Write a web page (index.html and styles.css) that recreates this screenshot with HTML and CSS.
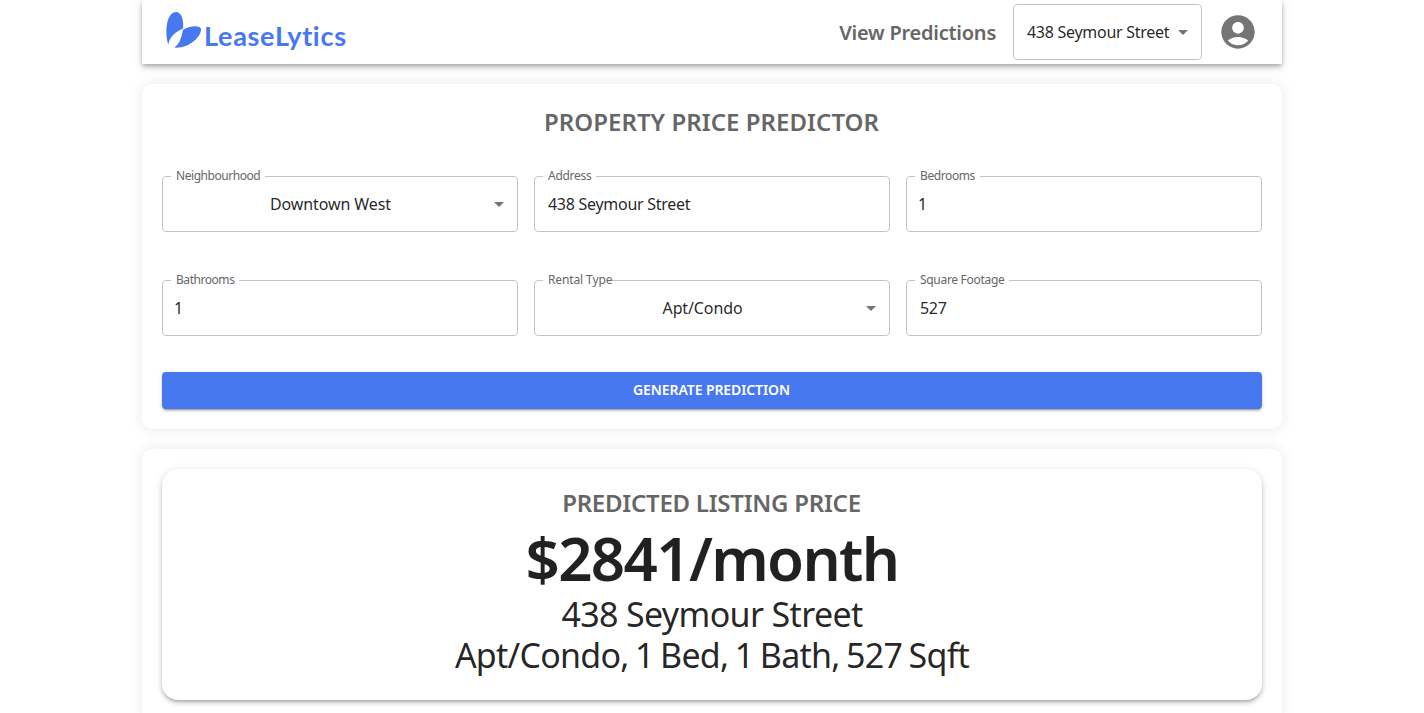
FILE: index.html
```html
<!DOCTYPE html>
<html lang="en">
<head>
<meta charset="utf-8">
<title>LeaseLytics</title>
<link rel="stylesheet" href="styles.css">
</head>
<body>
<div class="page">
  <header class="appbar">
    <a class="brand">
      <svg class="brand-mark" width="36" height="38" viewBox="0 0 36 38"><path d="M2.300 33.500C-1.500 23 0 1 10 1c6.200 0 8 10 6.900 16.800C10 20.500 4 25 2.300 33.500Z"/><path d="M8 36.600c5.500-3.200 7.500-10 8.900-17.600 5-4 17.500-5.500 18.100-1C35.500 25 24 37.800 8 36.600Z"/></svg>
      <span class="brand-name">LeaseLytics</span>
    </a>
    <nav class="nav">
      <a class="nav-link">View Predictions</a>
      <div class="picker"><span class="value">438 Seymour Street</span><svg class="arrow" viewBox="0 0 24 24"><path d="M7 10l5 5 5-5z"/></svg></div>
      <svg class="avatar" viewBox="0 0 24 24"><path d="M12 2C6.480 2 2 6.480 2 12s4.480 10 10 10 10-4.480 10-10S17.520 2 12 2zm0 4c1.930 0 3.500 1.570 3.500 3.500S13.930 13 12 13s-3.500-1.570-3.500-3.500S10.070 6 12 6zm0 14c-2.030 0-4.430-.82-6.140-2.880C7.550 15.800 9.680 15 12 15s4.450.8 6.140 2.120C16.430 19.180 14.030 20 12 20z"/></svg>
    </nav>
  </header>

  <section class="card">
    <h1 class="title title-form">PROPERTY PRICE PREDICTOR</h1>
    <div class="fields">
      <fieldset class="field"><legend class="lg-hood">Neighbourhood</legend><span class="value centered v-hood">Downtown West</span><svg class="arrow" viewBox="0 0 24 24"><path d="M7 10l5 5 5-5z"/></svg></fieldset>
      <fieldset class="field"><legend class="lg-address">Address</legend><span class="value">438 Seymour Street</span></fieldset>
      <fieldset class="field"><legend class="lg-bed">Bedrooms</legend><span class="value digit">1</span></fieldset>
      <fieldset class="field"><legend class="lg-bath">Bathrooms</legend><span class="value digit">1</span></fieldset>
      <fieldset class="field"><legend class="lg-type">Rental Type</legend><span class="value centered v-type">Apt/Condo</span><svg class="arrow" viewBox="0 0 24 24"><path d="M7 10l5 5 5-5z"/></svg></fieldset>
      <fieldset class="field"><legend class="lg-sqft">Square Footage</legend><span class="value">527</span></fieldset>
    </div>
    <button class="submit">GENERATE PREDICTION</button>
  </section>

  <section class="card">
    <div class="result">
      <h2 class="title title-result">PREDICTED LISTING PRICE</h2>
      <p class="price">$2841/month</p>
      <p class="detail d-address">438 Seymour Street</p>
      <p class="detail d-specs">Apt/Condo, 1 Bed, 1 Bath, 527 Sqft</p>
    </div>
  </section>
</div>
</body>
</html>
```
FILE: styles.css
```css
* { box-sizing: border-box; }
html { overflow: hidden; }
body { margin: 0; background: #fff; color: rgba(0,0,0,.87); font-family: "Noto Sans", "Open Sans", sans-serif; height: 713px; overflow: hidden; }
.page { width: 1140px; margin: 0 auto; display: flex; flex-direction: column; gap: 20px; }
.appbar { height: 64px; flex: none; padding: 0 24px; display: flex; justify-content: space-between; align-items: center; background: #fff; box-shadow: 0 2px 4px -1px rgba(0,0,0,.2), 0 4px 5px rgba(0,0,0,.14), 0 1px 10px rgba(0,0,0,.12); }
.brand { display: flex; align-items: center; gap: 2px; color: #4878ef; height: 64px; padding-bottom: 4px; }
.brand-mark { fill: currentColor; }
.brand-name { font: 700 27px/36px Lato, sans-serif; padding-top: 11px; letter-spacing: .7px; }
.nav { display: flex; align-items: center; }
.nav-link { color: #666; font-size: 20px; font-weight: 600; line-height: 32px; letter-spacing: -.24px; margin-right: 17px; padding-top: 1px; white-space: nowrap; }
.picker { width: 189px; height: 56px; border: 1px solid #c4c4c4; border-radius: 4px; padding: 0 6px 0 13px; display: flex; align-items: center; justify-content: space-between; margin-right: 16px; }
.value { font-size: 16px; line-height: 23px; letter-spacing: -.28px; white-space: nowrap; }
.arrow { width: 24px; height: 24px; flex: none; fill: #757575; }
.avatar { width: 40px; height: 40px; fill: #757575; }
.card { padding: 20px; border-radius: 10px; background: #fff; box-shadow: 0 0 15px rgba(0,0,0,.09); }
.title { margin: 0; text-align: center; font-size: 24px; line-height: 36px; font-weight: 600; color: #666; white-space: nowrap; }
.title-form { letter-spacing: .05px; padding-right: 1px; }
.title-result { letter-spacing: -.25px; padding-right: 1px; }
.fields { display: grid; grid-template-columns: repeat(3, 1fr); column-gap: 16px; row-gap: 43px; margin-top: 31px; }
.field { margin: 0; min-width: 0; height: 61px; border: 1px solid #c4c4c4; border-radius: 4px; padding: 0 6px 5px 13px; display: flex; align-items: center; justify-content: space-between; }
.field legend { margin-left: -5px; padding: 0 5px; font-size: 12px; line-height: 9px; height: 11px; color: #666; white-space: nowrap; }
.lg-hood { letter-spacing: -.45px; }
.lg-address { letter-spacing: -.28px; }
.lg-bed { letter-spacing: -.4px; }
.lg-bath { letter-spacing: -.45px; }
.field .lg-type { letter-spacing: -.12px; padding-right: 0; }
.lg-sqft { letter-spacing: -.3px; }
.digit { margin-left: -2px; }
.centered { flex: 1; text-align: center; padding-right: 2px; }
.v-hood { letter-spacing: -.1px; }
.v-type { letter-spacing: -.12px; }
.submit { display: block; width: 100%; height: 37px; margin-top: 36px; padding: 0 1px 1px 0; border: 0; border-radius: 4px; background: #4878ef; color: #fff; font: 600 14px/24px "Noto Sans", sans-serif; letter-spacing: -.1px; box-shadow: 0 3px 1px -2px rgba(0,0,0,.2), 0 2px 2px rgba(0,0,0,.14), 0 1px 5px rgba(0,0,0,.12); }
.result { height: 231px; border-radius: 16px; padding-top: 16px; text-align: center; background: #fff; box-shadow: 0 3px 3px -2px rgba(0,0,0,.2), 0 3px 4px rgba(0,0,0,.14), 0 1px 8px rgba(0,0,0,.12); }
.price { margin: 0; font-size: 60px; line-height: 74px; height: 72px; font-weight: 600; letter-spacing: -1.65px; }
.detail { margin: 0; font-size: 34px; line-height: 42px; white-space: nowrap; }
.d-address { letter-spacing: -.65px; }
.d-specs { letter-spacing: -.75px; word-spacing: -1.7px; line-height: 40px; }
```
